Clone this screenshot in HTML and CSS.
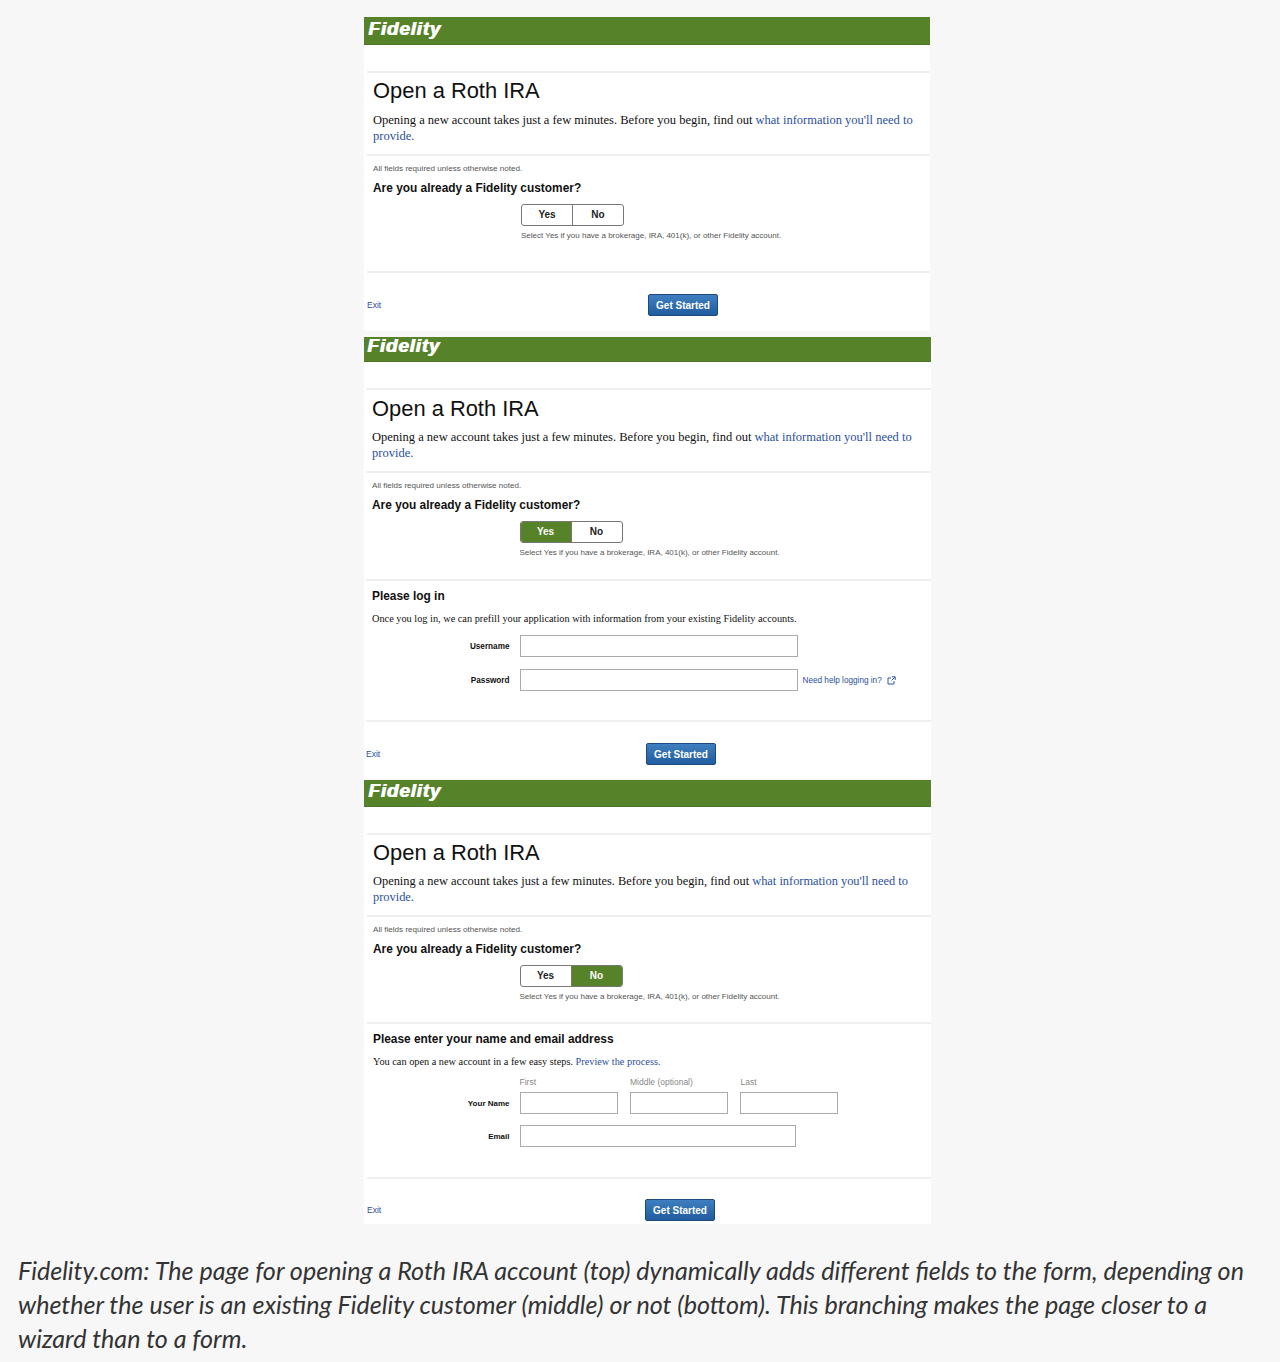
FILE: index.html
```html
<!DOCTYPE html>
<html lang="en">
<head>
    <meta charset="UTF-8">
    <title>Open a Roth IRA</title>
    <link rel="stylesheet" href="styles.css">
</head>
<body>

<figure class="figure">
    <div class="panel panel-top">
        <div class="banner"><span class="logo">Fidelity</span></div>
        <div class="intro">
            <h1>Open a Roth IRA</h1>
            <p class="serif">Opening a new account takes just a few minutes. Before you begin, find out <a href="#">what information you'll need to</a> <a href="#">provide.</a></p>
        </div>
        <div class="question">
            <p class="note">All fields required unless otherwise noted.</p>
            <h2>Are you already a Fidelity customer?</h2>
            <div class="toggle">
                <span class="opt">Yes</span>
                <span class="opt">No</span>
            </div>
            <p class="hint">Select Yes if you have a brokerage, IRA, 401(k), or other Fidelity account.</p>
        </div>
        <div class="actions">
            <a class="exit" href="#">Exit</a>
            <button class="btn">Get Started</button>
        </div>
    </div>

    <div class="panel panel-mid">
        <div class="banner"><span class="logo">Fidelity</span></div>
        <div class="intro">
            <h1>Open a Roth IRA</h1>
            <p class="serif">Opening a new account takes just a few minutes. Before you begin, find out <a href="#">what information you'll need to</a> <a href="#">provide.</a></p>
        </div>
        <div class="question">
            <p class="note">All fields required unless otherwise noted.</p>
            <h2>Are you already a Fidelity customer?</h2>
            <div class="toggle">
                <span class="opt on">Yes</span>
                <span class="opt">No</span>
            </div>
            <p class="hint">Select Yes if you have a brokerage, IRA, 401(k), or other Fidelity account.</p>
        </div>
        <div class="extra">
            <h2>Please log in</h2>
            <p class="serif small">Once you log in, we can prefill your application with information from your existing Fidelity accounts.</p>
            <div class="row login-row">
                <label>Username</label>
                <input class="field wide" type="text">
            </div>
            <div class="row">
                <label>Password</label>
                <input class="field wide" type="password">
                <a class="help" href="#">Need help logging in?</a>
                <svg class="ext" width="9" height="9" viewBox="0 0 9 9" fill="none" stroke="#2a5aa8" stroke-width="1">
                    <path d="M4 2H1v6h6V5"/>
                    <path d="M5 .8h3.2V4M8 1 4.5 4.5"/>
                </svg>
            </div>
        </div>
        <div class="actions">
            <a class="exit" href="#">Exit</a>
            <button class="btn">Get Started</button>
        </div>
    </div>

    <div class="panel panel-bot">
        <div class="banner"><span class="logo">Fidelity</span></div>
        <div class="intro">
            <h1>Open a Roth IRA</h1>
            <p class="serif">Opening a new account takes just a few minutes. Before you begin, find out <a href="#">what information you'll need to</a> <a href="#">provide.</a></p>
        </div>
        <div class="question">
            <p class="note">All fields required unless otherwise noted.</p>
            <h2>Are you already a Fidelity customer?</h2>
            <div class="toggle">
                <span class="opt">Yes</span>
                <span class="opt on">No</span>
            </div>
            <p class="hint">Select Yes if you have a brokerage, IRA, 401(k), or other Fidelity account.</p>
        </div>
        <div class="extra">
            <h2>Please enter your name and email address</h2>
            <p class="serif small">You can open a new account in a few easy steps. <a href="#">Preview the process.</a></p>
            <div class="row name-caps">
                <span class="cap">First</span>
                <span class="cap">Middle (optional)</span>
                <span class="cap">Last</span>
            </div>
            <div class="row">
                <label>Your Name</label>
                <input class="field short" type="text">
                <input class="field short" type="text">
                <input class="field short" type="text">
            </div>
            <div class="row email-row">
                <label>Email</label>
                <input class="field email" type="text">
            </div>
        </div>
        <div class="actions">
            <a class="exit" href="#">Exit</a>
            <button class="btn">Get Started</button>
        </div>
    </div>
</figure>

<p class="caption">Fidelity.com: The page for opening a Roth IRA account (top) dynamically adds different fields to the form, depending on whether the user is an existing Fidelity customer (middle) or not (bottom). This branching makes the page closer to a wizard than to a form.</p>

</body>
</html>
```

FILE: styles.css
```css
body {
    background-color: #f7f7f7;
    margin: 0;
    color: #111;
    font-family: 'Liberation Sans', Arial, sans-serif;
}
p, h1, h2 {
    margin: 0;
    font-weight: normal;
}
a {
    color: #2a4f9e;
    text-decoration: none;
}
.figure {
    margin: 17px 0 0 364px;
    width: 567px;
}
.panel {
    background-color: white;
    --rule: 3px;
    --text: 6px;
    --field: 148px;
    --exit-w: 281px;
}
.panel-top {
    width: 566px;
}
.panel-mid {
    margin-top: 6px;
    --rule: 2px;
    --field: 147.5px;
    --exit-w: 280px;
}
.panel-bot {
    margin-top: 1px;
    --field: 146.5px;
    --exit-w: 278px;
}
.banner {
    height: 28px;
    box-sizing: border-box;
    padding-left: 4px;
    background-color: #56822a;
    border-bottom: 1px solid #4c7724;
    margin-bottom: 26px;
    line-height: 24px;
}
.panel-mid .banner {
    height: 25px;
    line-height: 18px;
    padding-left: 3px;
}
.panel-bot .banner {
    height: 27px;
    line-height: 22px;
}
.logo {
    color: white;
    font-size: 19px;
    font-weight: bold;
    font-style: italic;
    letter-spacing: 0.8px;
    text-shadow: 1px 0 0 white;
}
.intro, .question, .extra {
    margin-left: var(--rule);
    padding-left: var(--text);
    border-top: 2px solid #efefef;
}
.intro {
    padding-top: 4px;
    padding-bottom: 10px;
    padding-right: 12px;
}
.panel-mid .intro {
    padding-top: 5px;
}
.panel-bot .intro {
    padding-top: 4px;
}
h1 {
    font-size: 21.9px;
    line-height: 28px;
    margin-bottom: 7px;
}
.panel-mid h1, .panel-bot h1 {
    margin-bottom: 6px;
}
.serif {
    font-family: 'Liberation Serif', serif;
    font-size: 12.5px;
    line-height: 16px;
}
.panel-bot .intro .serif {
    font-size: 12.4px;
}
.question {
    padding-top: 6px;
    padding-bottom: 20px;
}
.panel-top .question {
    padding-bottom: 29px;
}
.panel-bot .question {
    padding-bottom: 19px;
}
.note {
    font-size: 8.1px;
    line-height: 14px;
    color: #555;
    margin-bottom: 4px;
}
h2 {
    font-size: 11.9px;
    font-weight: bold;
    line-height: 16px;
}
.toggle {
    display: flex;
    width: 103px;
    height: 22px;
    box-sizing: border-box;
    margin: 8px 0 4px var(--field);
    border: 1px solid #777;
    border-radius: 3px;
    overflow: hidden;
}
.opt {
    flex: 1;
    text-align: center;
    font-size: 10px;
    font-weight: bold;
    line-height: 20px;
    color: #222;
}
.opt + .opt {
    border-left: 1px solid #777;
}
.opt.on {
    background-color: #56822a;
    color: white;
}
.hint {
    margin-left: var(--field);
    font-size: 8px;
    line-height: 12px;
    color: #555;
}
.extra {
    padding-top: 7px;
    padding-bottom: 29px;
}
.serif.small {
    font-size: 10.3px;
    line-height: 14px;
    margin-top: 8px;
}
.row {
    display: flex;
    align-items: center;
    gap: 12px;
}
.login-row {
    margin-top: 9px;
    margin-bottom: 12px;
}
.row label {
    width: calc(var(--field) - 10px);
    margin-right: -2px;
    text-align: right;
    font-size: 8.2px;
    font-weight: bold;
}
.panel-bot .row label {
    font-size: 8px;
}
.field {
    height: 22px;
    box-sizing: border-box;
    margin: 0;
    padding: 0;
    background-color: white;
    border: 1px solid #aaa;
    border-radius: 0;
}
.wide {
    width: 278px;
}
.help {
    margin-left: -7px;
    font-size: 8.2px;
}
.ext {
    margin-left: -7px;
}
.name-caps {
    margin-top: 7px;
    margin-bottom: 4px;
    margin-left: var(--field);
    gap: 0;
    height: 12px;
}
.cap {
    width: 110.5px;
    font-size: 8.5px;
    color: #888;
}
.short {
    width: 98px;
}
.email-row {
    margin-top: 11px;
}
.email {
    width: 276px;
}
.panel-bot .extra {
    padding-bottom: 30px;
}
.actions {
    display: flex;
    align-items: center;
    margin-left: var(--rule);
    padding-top: 21px;
    padding-bottom: 15px;
    border-top: 2px solid #efefef;
}
.panel-mid .actions {
    padding-bottom: 14px;
}
.panel-bot .actions {
    padding-top: 20px;
    padding-bottom: 3px;
}
.exit {
    width: var(--exit-w);
    font-size: 8.5px;
}
.btn {
    width: 70px;
    height: 22px;
    padding: 0;
    border: 1px solid #1c4a80;
    border-radius: 2px;
    background: linear-gradient(#3f7fbf, #205c9f);
    color: white;
    font-family: 'Liberation Sans', Arial, sans-serif;
    font-size: 10px;
    font-weight: bold;
}
.caption {
    margin: 29px 0 0 18px;
    width: 1245px;
    font-family: Lato, sans-serif;
    font-style: italic;
    font-size: 25.1px;
    line-height: 34px;
    color: #333;
}
```
